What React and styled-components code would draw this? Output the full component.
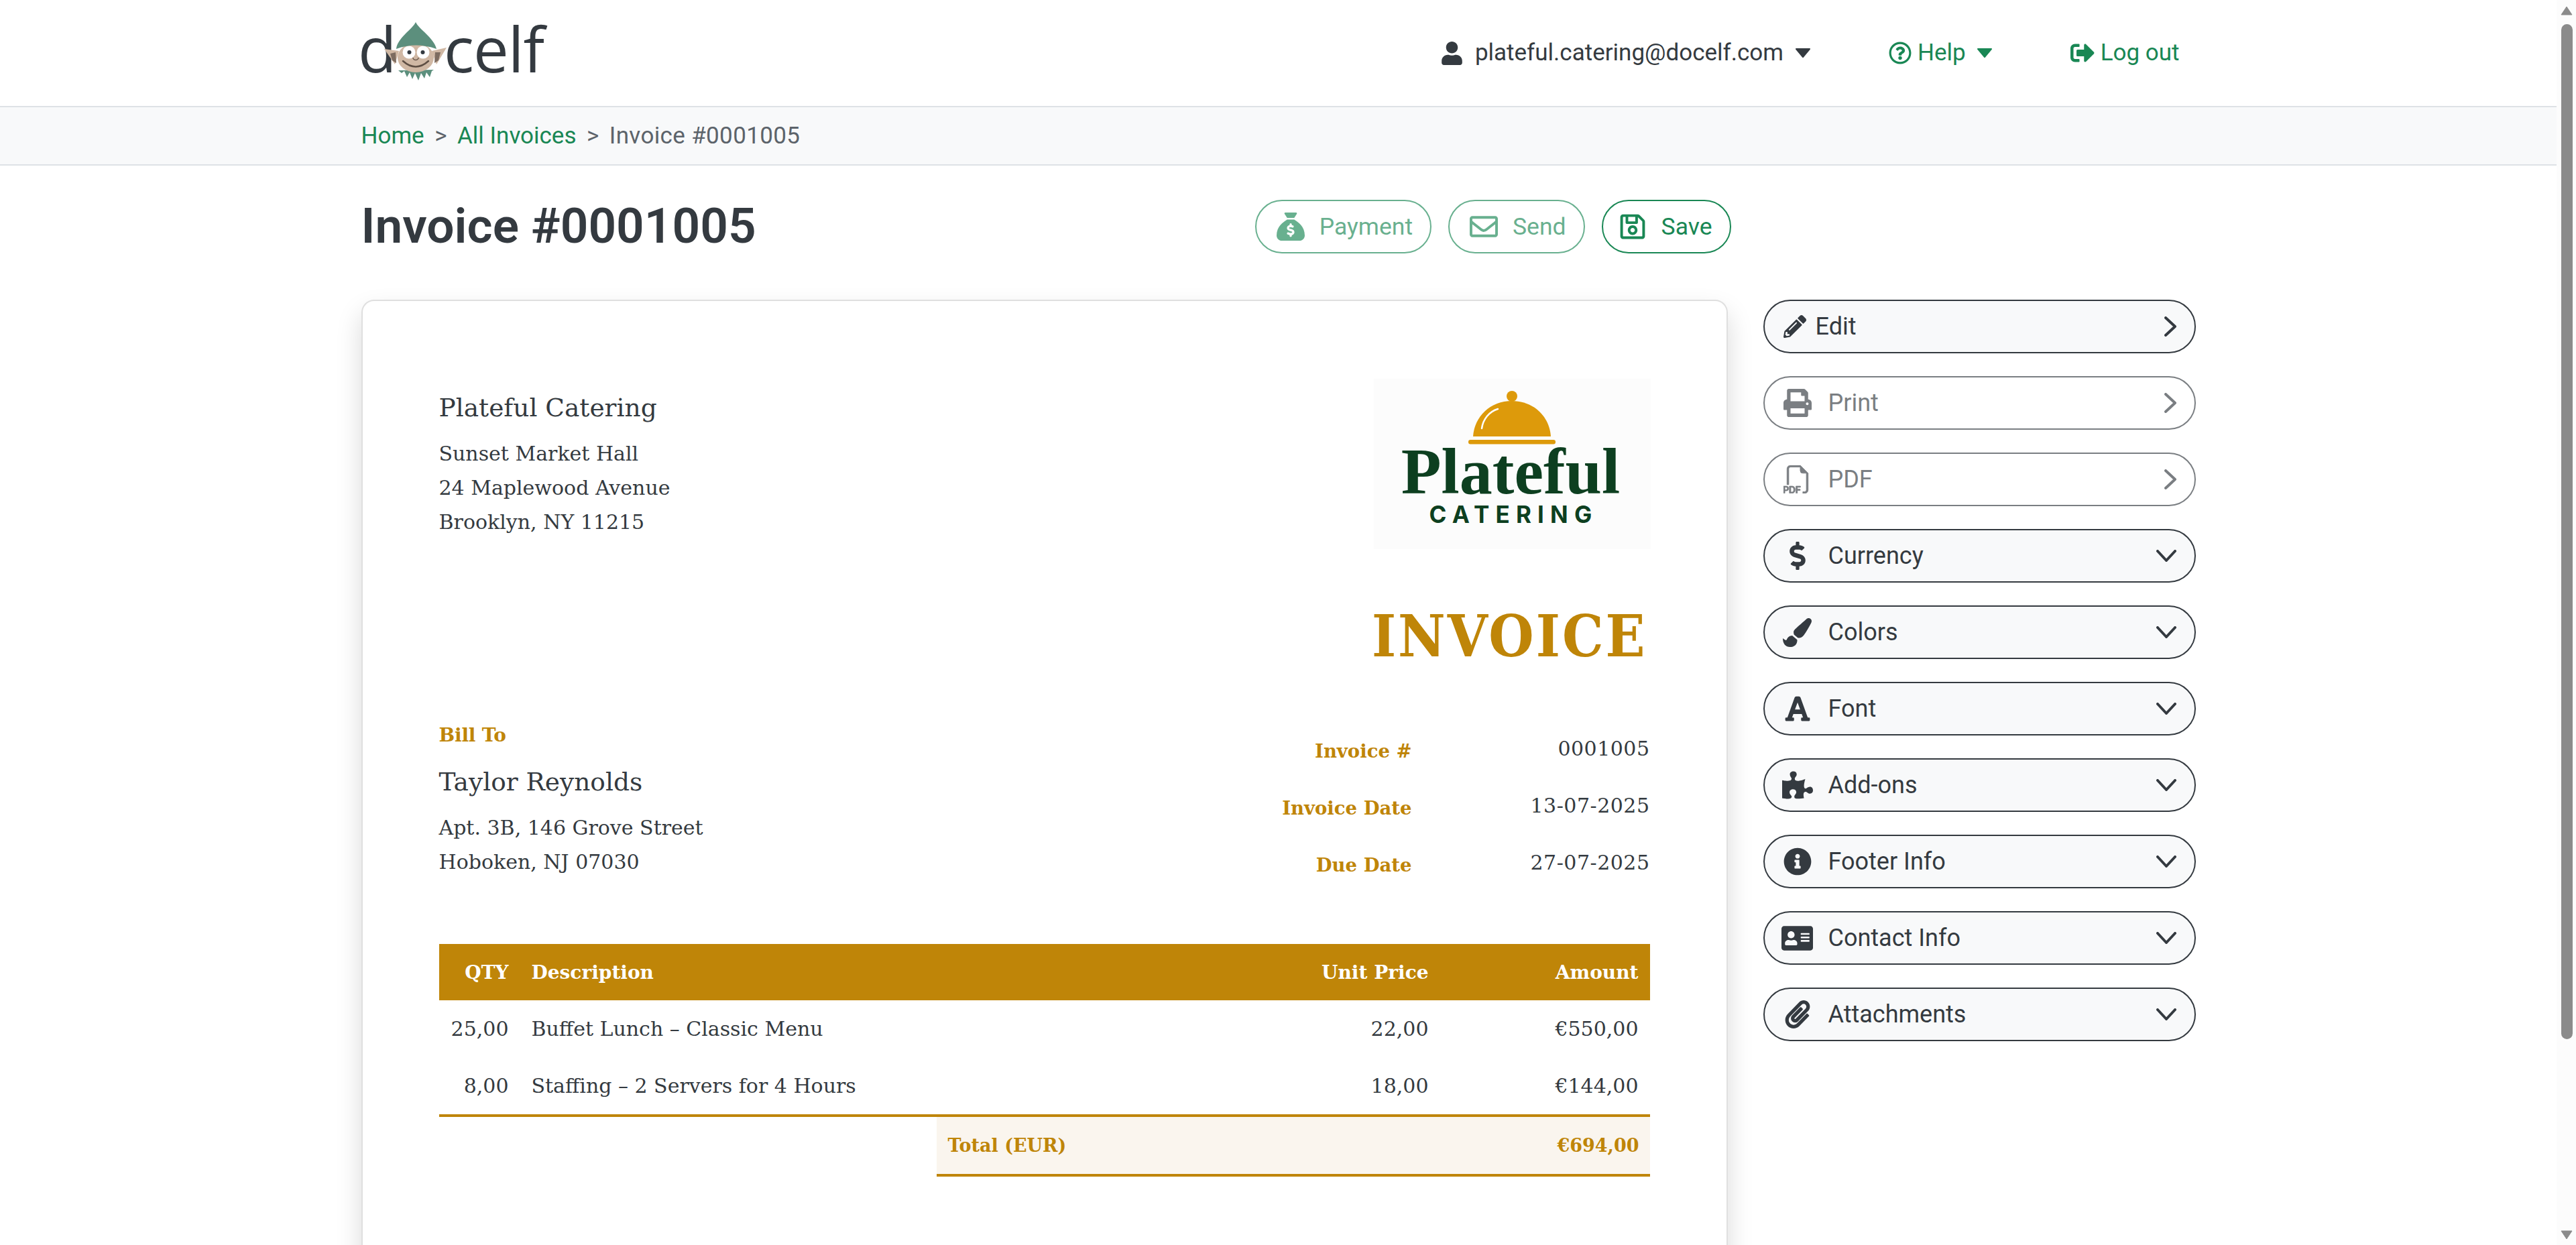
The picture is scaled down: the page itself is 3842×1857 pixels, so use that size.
import React from "react";
import styled, { createGlobalStyle } from "styled-components";
import {
  FaUser, FaRegQuestionCircle, FaSignOutAlt, FaRegEnvelope, FaRegSave, FaPencilAlt, FaPrint,
  FaDollarSign, FaPaintBrush, FaFont, FaPuzzlePiece, FaInfoCircle, FaAddressCard, FaPaperclip,
} from "react-icons/fa";
import { FaSackDollar } from "react-icons/fa6";
import { BsFiletypePdf } from "react-icons/bs";

const INK = "#343a40";
const GREEN = "#198754";
const GOLD = "#bf8508";
const UI = `Roboto, "Liberation Sans", sans-serif`;
const SLAB = `"DejaVu Serif", serif`;
const SLAB_NARROW = `"DejaVu Serif Condensed", "DejaVu Serif", serif`;

const Global = createGlobalStyle`
  html, body { margin: 0; padding: 0; height: 100%; overflow: hidden; background: #fff; }
  * { box-sizing: border-box; }
`;

const Shell = styled.div`display: flex; height: 100vh; overflow: hidden; font-family: ${UI}; color: ${INK};`;
const Page = styled.div`flex: 1; min-width: 0; overflow: hidden;`;

const Rail = styled.aside`width: 29px; flex: none; height: 100%; background: #fcfcfc; display: flex; flex-direction: column; align-items: center; padding: 9px 0 8px 1px;`;
const RailThumb = styled.div`width: 17px; height: 1514px; margin-top: 13px; margin-bottom: auto; border-radius: 9px; background: #8b8b8b;`;

const HeaderBar = styled.header`height: 160px; border-bottom: 2px solid #dee2e6; background: #fff;`;
const Container = styled.div`width: 2736px; margin: 0 auto;`;
const HeaderInner = styled(Container)`height: 100%; display: flex; align-items: center; justify-content: space-between; padding-right: 24px;`;
const Brand = styled.svg`width: 320px; height: 100px; display: block; margin: -2px 0 0 -10px; overflow: visible;`;
const Nav = styled.nav`display: flex; align-items: center; gap: 116px; font-size: 35px;`;
const NavItem = styled.a`display: flex; align-items: center; gap: ${(p) => p.$gap}px; color: ${(p) => (p.$plain ? INK : GREEN)}; line-height: 40px;`;
const NavCaret = styled.svg`width: 24px; height: 14px; margin-left: ${(p) => p.$ml}px; fill: currentColor; stroke: currentColor; stroke-width: 2; stroke-linejoin: round;`;

const CrumbBar = styled.div`height: 87px; background: #f8f9fa; border-bottom: 2px solid #dee2e6;`;
const CrumbInner = styled(Container)`height: 100%; display: flex; align-items: center; font-size: 35px; gap: 15.5px;`;
const Crumb = styled.a`color: ${GREEN};`;
const CrumbSep = styled.span`color: #5c636a;`;
const CrumbCurrent = styled.span`color: #5c636a; letter-spacing: .35px;`;

const TitleRow = styled.div`width: 2043px; height: 200px; padding-bottom: 18px; display: flex; align-items: center; justify-content: space-between;`;
const Title = styled.h1`margin: 0; font-size: 73px; font-weight: 600; color: ${INK}; line-height: 1.2; font-family: ${UI};`;
const Actions = styled.div`display: flex; align-items: center; gap: 25px;`;
const ActionButton = styled.button`
  height: 80px; display: flex; align-items: center; gap: 22px; padding: 0 26px 0 ${(p) => p.$pl || 30}px;
  border: 2.4px solid ${GREEN}; border-radius: 40px; background: #fff; color: ${GREEN};
  font-family: ${UI}; font-size: 35.5px; opacity: ${(p) => (p.$off ? 0.65 : 1)};
  svg { font-size: 42px; flex: none; }
`;

const Columns = styled.div`display: flex; gap: 53px; align-items: flex-start;`;
const Card = styled.main`
  width: 2038px; flex: none; height: 1500px; padding: 116px 114px; background: #fff;
  border: 2.4px solid rgba(0,0,0,.125); border-radius: 19px; box-shadow: 0 19px 38px rgba(0,0,0,.15);
  font-family: ${SLAB}; font-size: 30px; color: ${INK};
`;
const SenderRow = styled.div`display: flex; justify-content: space-between; align-items: flex-start;`;
const SenderCol = styled.div`padding-top: 18px;`;
const PartyName = styled.div`font-size: 37.5px; line-height: 50px; margin-bottom: ${(p) => p.$after}px;`;
const AddressLine = styled.div`line-height: 51px;`;

const LogoBox = styled.div`width: 413px; height: 254px; margin-right: -1px; background: #fcfcfc; display: flex; flex-direction: column; align-items: center; padding-top: 16px;`;
const LogoDome = styled.svg`width: 132px; height: 84px; display: block; flex: none;`;
const LogoWord = styled.div`font-family: "Liberation Serif", serif; font-weight: 700; font-size: 98px; line-height: 76px; color: #0d3f20; margin-right: 4px;`;
const LogoSub = styled.div`font-family: Inter, sans-serif; font-weight: 700; font-size: 35px; line-height: 36px; letter-spacing: 9.2px; color: #0d3f20; margin-top: 8px; margin-right: -5px;`;

const DocTitle = styled.div`margin-top: 80px; text-align: right; font-family: ${SLAB_NARROW}; font-size: 86px; line-height: 100px; font-weight: 700; color: ${GOLD}; letter-spacing: 3px; padding-right: 4px;`;

const BillRow = styled.div`display: flex; justify-content: space-between; align-items: flex-start; margin-top: 72px; height: 241px;`;
const BillCol = styled.div``;
const BillLabel = styled.div`line-height: 51px; font-weight: 700; color: ${GOLD}; font-size: 28px; letter-spacing: -.2px; margin-bottom: 19px;`;
const Meta = styled.dl`margin: 6px 0 0; display: grid; grid-template-columns: max-content 355px; grid-auto-rows: 85px; align-items: center;`;
const MetaLabel = styled.dt`font-weight: 700; color: ${GOLD}; text-align: right; font-size: 27.5px;`;
const MetaValue = styled.dd`margin: -6px 0 0; text-align: right; letter-spacing: .5px;`;

const InvoiceTable = styled.div`margin-top: 96px;`;
const GridRow = styled.div`display: grid; grid-template-columns: 121px 1fr 240px 313px; align-items: center; height: ${(p) => p.$h}px;`;
const HeadRow = styled(GridRow)`background: ${GOLD}; color: #fff; font-weight: 700; font-size: 28px;`;
const Cell = styled.div`padding: 0 17px; white-space: nowrap; text-align: ${(p) => (p.$right ? "right" : "left")};`;
const Rows = styled.div`border-bottom: 4px solid ${GOLD};`;
const TotalBar = styled.div`margin-left: 742px; height: 89px; background: #faf5ee; border-bottom: 4px solid ${GOLD}; display: flex; align-items: center; justify-content: space-between; padding: 0 16px 0 17px; color: ${GOLD}; font-weight: 700; font-size: 27px;`;

const Side = styled.aside`width: 645px; flex: none; display: flex; flex-direction: column; gap: 34px;`;
const SideButton = styled.button`
  width: 100%; height: 80px; display: flex; align-items: center; padding: 0 27px 0 27px;
  border: 2.4px solid ${INK}; border-radius: 40px; background: ${(p) => (p.$off ? "#fff" : "#f8f9fa")};
  color: ${INK}; opacity: ${(p) => (p.$off ? 0.65 : 1)}; font-family: ${UI}; font-size: 36px; text-align: left;
`;
const SideIcon = styled.span`
  width: ${(p) => p.$slot}px; flex: none; display: flex; justify-content: center; align-items: center;
  margin-right: ${(p) => p.$gap}px; font-size: ${(p) => p.$size}px;
  svg { flex: none; }
`;
const SideLabel = styled.span`flex: 1;`;
const Chevron = styled.svg`flex: none; fill: none; stroke: currentColor; stroke-width: 4; stroke-linecap: round; stroke-linejoin: round;`;

const Elf = () => (
  <Brand viewBox="-10 30 320 100" aria-label="docelf logo">
    <text x="-5" y="110" fontFamily="'Open Sans', sans-serif" fontSize="94" fill="#343a40">d</text>
    <text x="123" y="110" fontFamily="'Open Sans', sans-serif" fontSize="94" fill="#343a40" letterSpacing="-1">celf</text>
    <path d="M55 107 60 111 64 108 68 117 72 110 76 120 80 111 85 122 89 111 94 119 97 110 102 117 105 108 108 106Z" fill="#5c8f7d" />
    <path d="M34 75 56 78 50 98Z" fill="#d0b8a4" />
    <path d="M127 73 105 78 112 98Z" fill="#d0b8a4" />
    <path d="M43 82 51 80 52 96 46 92Z" fill="#7d6c60" />
    <path d="M118 80 110 80 109 96 115 92Z" fill="#7d6c60" />
    <ellipse cx="81" cy="88" rx="27" ry="22" fill="#d0b8a4" />
    <circle cx="71" cy="80" r="9.5" fill="#fff" />
    <circle cx="92" cy="80" r="9.5" fill="#fff" />
    <circle cx="71.500" cy="80" r="3" fill="#343a40" />
    <circle cx="91.500" cy="80" r="3" fill="#343a40" />
    <path d="M77 88a4 3.500 0 0 0 8 0" fill="none" stroke="#6b5a4e" strokeWidth="1.500" />
    <path d="M62 93Q81 110 100 93" fill="none" stroke="#5e4e43" strokeWidth="2.500" strokeLinecap="round" />
    <path d="M81 35C76 46 54 58 52 75Q81 64 112 75C108 58 86 46 81 35Z" fill="#5c8f7d" />
  </Brand>
);

const ScrollArrow = ({ up }) => (
  <svg width="18" height="14" viewBox="0 0 18 14"><path d={up ? "M9 1 17 13H1Z" : "M1 1H17L9 13Z"} fill="#8b8b8b" stroke="#8b8b8b" strokeWidth="1" strokeLinejoin="round" /></svg>
);

const Caret = ({ ml }) => <NavCaret $ml={ml} viewBox="0 0 24 14"><path d="M2 1H22L12 13Z" /></NavCaret>;
const ChevronRight = () => <Chevron width="18" height="30" viewBox="0 0 18 30"><path d="M2 2 16 15 2 28" /></Chevron>;
const ChevronDown = () => <Chevron width="30" height="18" viewBox="0 0 30 18"><path d="M2 2 15 16 28 2" /></Chevron>;
const PdfIcon = () => <BsFiletypePdf stroke="currentColor" strokeWidth=".3" />;

const sideItems = [
  { label: "Edit", Icon: FaPencilAlt, size: 34, slot: 36, gap: 13, right: true },
  { label: "Print", Icon: FaPrint, size: 42, slot: 44, gap: 24, right: true, off: true },
  { label: "PDF", Icon: PdfIcon, size: 42, slot: 44, gap: 24, right: true, off: true },
  { label: "Currency", Icon: FaDollarSign, size: 42, slot: 44, gap: 24 },
  { label: "Colors", Icon: FaPaintBrush, size: 43, slot: 44, gap: 24 },
  { label: "Font", Icon: FaFont, size: 42, slot: 44, gap: 24 },
  { label: "Add-ons", Icon: FaPuzzlePiece, size: 46, slot: 44, gap: 24 },
  { label: "Footer Info", Icon: FaInfoCircle, size: 42, slot: 44, gap: 24 },
  { label: "Contact Info", Icon: FaAddressCard, size: 47, slot: 44, gap: 24 },
  { label: "Attachments", Icon: FaPaperclip, size: 42, slot: 44, gap: 24 },
];

const lines = [
  ["25,00", "Buffet Lunch – Classic Menu", "22,00", "€550,00"],
  ["8,00", "Staffing – 2 Servers for 4 Hours", "18,00", "€144,00"],
];

const meta = [
  ["Invoice #", "0001005"],
  ["Invoice Date", "13-07-2025"],
  ["Due Date", "27-07-2025"],
];

export default function App() {
  return (
    <Shell>
      <Global />
      <Page>
        <HeaderBar>
          <HeaderInner>
            <Elf />
            <Nav>
              <NavItem $plain $gap={17}><FaUser size={35} /><span>plateful.catering@docelf.com</span><Caret ml={0} /></NavItem>
              <NavItem $gap={9}><FaRegQuestionCircle size={34} /><span>Help</span><Caret ml={7} /></NavItem>
              <NavItem $gap={9}><FaSignOutAlt size={36} /><span>Log out</span></NavItem>
            </Nav>
          </HeaderInner>
        </HeaderBar>
        <CrumbBar>
          <CrumbInner>
            <Crumb>Home</Crumb>
            <CrumbSep>&gt;</CrumbSep>
            <Crumb>All Invoices</Crumb>
            <CrumbSep>&gt;</CrumbSep>
            <CrumbCurrent>Invoice #0001005</CrumbCurrent>
          </CrumbInner>
        </CrumbBar>
        <Container>
          <TitleRow>
            <Title>Invoice #0001005</Title>
            <Actions>
              <ActionButton $off><FaSackDollar />Payment</ActionButton>
              <ActionButton $off><FaRegEnvelope />Send</ActionButton>
              <ActionButton $pl={23}><FaRegSave />Save</ActionButton>
            </Actions>
          </TitleRow>
          <Columns>
            <Card>
              <SenderRow>
                <SenderCol>
                  <PartyName $after={18}>Plateful Catering</PartyName>
                  <AddressLine>Sunset Market Hall</AddressLine>
                  <AddressLine>24 Maplewood Avenue</AddressLine>
                  <AddressLine>Brooklyn, NY 11215</AddressLine>
                </SenderCol>
                <LogoBox>
                  <LogoDome viewBox="0 0 132 84">
                    <circle cx="66" cy="10" r="8" fill="#dd9a0b" />
                    <path d="M8 70C10 40 34 17 66 17S122 40 124 70Z" fill="#dd9a0b" />
                    <rect x="1" y="75" width="130" height="6.500" rx="3" fill="#dd9a0b" />
                    <path d="M21 58C23 44 32 33 45 29" fill="none" stroke="#fff" strokeWidth="2.500" strokeLinecap="round" />
                  </LogoDome>
                  <LogoWord>Plateful</LogoWord>
                  <LogoSub>CATERING</LogoSub>
                </LogoBox>
              </SenderRow>
              <DocTitle>INVOICE</DocTitle>
              <BillRow>
                <BillCol>
                  <BillLabel>Bill To</BillLabel>
                  <PartyName $after={18}>Taylor Reynolds</PartyName>
                  <AddressLine>Apt. 3B, 146 Grove Street</AddressLine>
                  <AddressLine>Hoboken, NJ 07030</AddressLine>
                </BillCol>
                <Meta>
                  {meta.map(([k, v]) => (
                    <React.Fragment key={k}>
                      <MetaLabel>{k}</MetaLabel>
                      <MetaValue>{v}</MetaValue>
                    </React.Fragment>
                  ))}
                </Meta>
              </BillRow>
              <InvoiceTable>
                <HeadRow $h={84}>
                  <Cell $right>QTY</Cell>
                  <Cell>Description</Cell>
                  <Cell $right>Unit Price</Cell>
                  <Cell $right>Amount</Cell>
                </HeadRow>
                <Rows>
                  {lines.map((l) => (
                    <GridRow $h={85} key={l[1]}>
                      <Cell $right>{l[0]}</Cell>
                      <Cell>{l[1]}</Cell>
                      <Cell $right>{l[2]}</Cell>
                      <Cell $right>{l[3]}</Cell>
                    </GridRow>
                  ))}
                </Rows>
                <TotalBar><span>Total (EUR)</span><span>€694,00</span></TotalBar>
              </InvoiceTable>
            </Card>
            <Side>
              {sideItems.map(({ label, Icon, size, slot, gap, right, off }) => (
                <SideButton key={label} $off={off}>
                  <SideIcon $size={size} $slot={slot} $gap={gap}><Icon /></SideIcon>
                  <SideLabel>{label}</SideLabel>
                  {right ? <ChevronRight /> : <ChevronDown />}
                </SideButton>
              ))}
            </Side>
          </Columns>
        </Container>
      </Page>
      <Rail>
        <ScrollArrow up />
        <RailThumb />
        <ScrollArrow />
      </Rail>
    </Shell>
  );
}
